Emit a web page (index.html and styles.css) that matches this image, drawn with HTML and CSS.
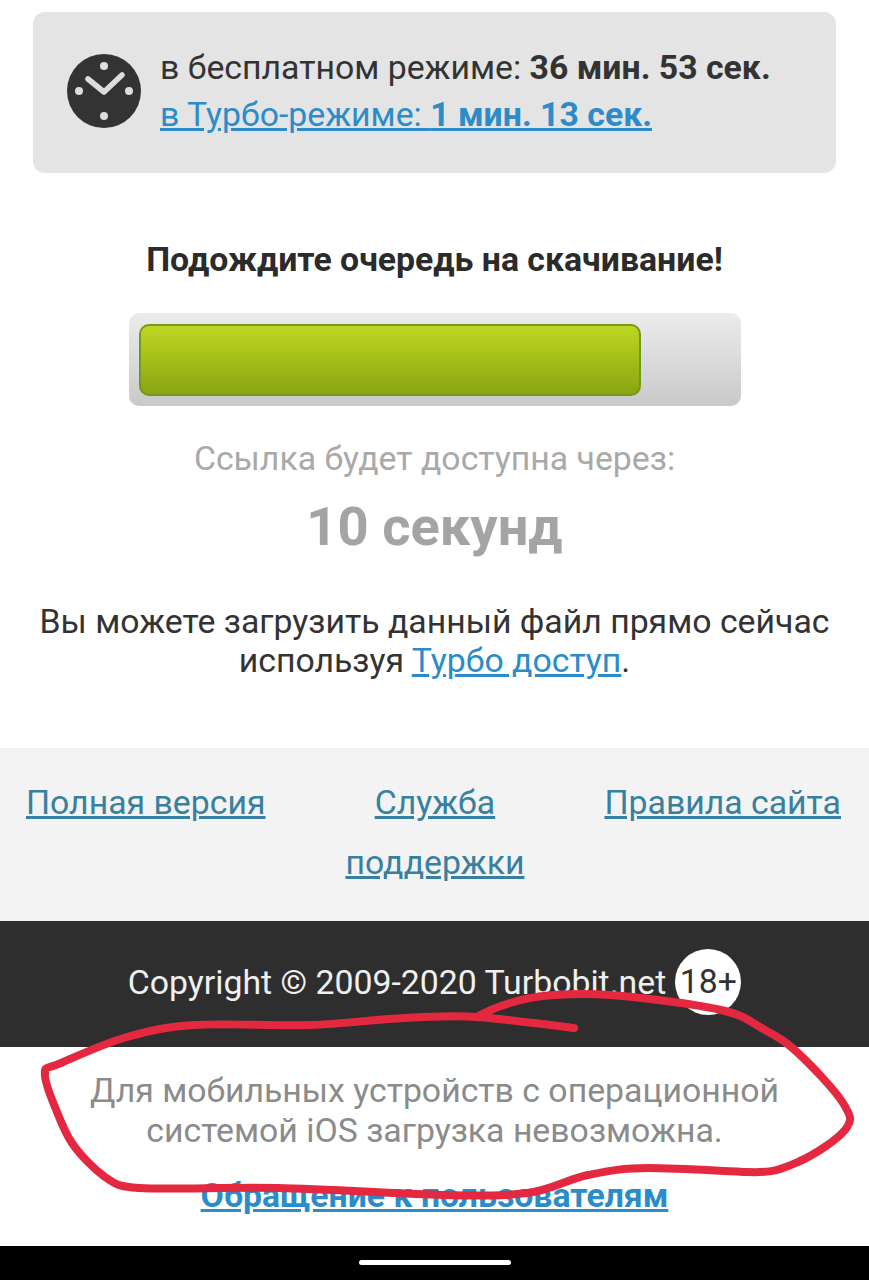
FILE: index.html
```html
<!DOCTYPE html>
<html lang="ru">
<head>
<meta charset="utf-8">
<title>Turbobit</title>
<link rel="stylesheet" href="styles.css">
</head>
<body>
<div class="page">
  <div class="timer">
    <svg class="clock" viewBox="0 0 74 74" width="74" height="74">
      <circle cx="37" cy="37" r="37" fill="#333"/>
      <circle cx="37" cy="12" r="4" fill="#ddd"/>
      <circle cx="37" cy="62" r="4" fill="#ddd"/>
      <circle cx="12" cy="37" r="4" fill="#ddd"/>
      <circle cx="62" cy="37" r="4" fill="#ddd"/>
      <path d="M21 25 L37 38 L55 21" fill="none" stroke="#ddd" stroke-width="5.5" stroke-linecap="round" stroke-linejoin="round"/>
    </svg>
    <div class="timer-text">
      <div>в бесплатном режиме: <b>36 мин. 53 сек.</b></div>
      <a href="#">в Турбо-режиме: <b>1 мин. 13 сек.</b></a>
    </div>
  </div>
  <h1 class="wait">Подождите очередь на скачивание!</h1>
  <div class="bar"><div class="fill"></div></div>
  <p class="avail">Ссылка будет доступна через:</p>
  <p class="secs">10 секунд</p>
  <p class="now">Вы можете загрузить данный файл прямо сейчас<br>используя <a href="#">Турбо доступ</a>.</p>
  <nav class="links">
    <a href="#">Полная версия</a>
    <a href="#" class="mid">Служба поддержки</a>
    <a href="#">Правила сайта</a>
  </nav>
  <footer class="copy">
    <span>Copyright © 2009-2020 Turbobit.net</span><span class="age">18+</span>
  </footer>
  <p class="ios">Для мобильных устройств с операционной<br>системой iOS загрузка невозможна.</p>
  <a href="#" class="appeal">Обращение к пользователям</a>
  <div class="navbar"><span class="pill"></span></div>
  <svg class="scribble" viewBox="0 0 869 1280" width="869" height="1280">
    <path d="M574 1028 C558 1026 505 1019 477 1017 C449 1015 433 1017 405 1018 C377 1019 345 1024 310 1025 C275 1026 224 1023 194 1025 C164 1027 149 1031 127 1037 C105 1043 75 1057 61 1063 C47 1069 44 1066 45 1073 C44 1080 50 1095 55 1107 C60 1119 64 1131 72 1143 C80 1155 94 1169 105 1177 C116 1184 115 1186 139 1188 C168 1190 227 1187 277 1188 C327 1189 401 1194 443 1195 C485 1196 503 1196 527 1193 C551 1190 568 1179 588 1175 C608 1171 622 1168 649 1168 C676 1168 723 1171 748 1172 C773 1173 782 1169 798 1162 C814 1155 837 1140 845 1130 C853 1120 851 1116 843 1103 C835 1090 811 1065 798 1053 C785 1041 778 1037 765 1030 C752 1023 747 1016 721 1010 C695 1004 638 997 610 995 C582 993 571 994 554 995 C537 996 523 999 510 1003 C500 1006 487 1011 477 1017" fill="none" stroke="#e3283f" stroke-width="8" stroke-linecap="round" stroke-linejoin="round"/>
  </svg>
</div>
</body>
</html>
```
FILE: styles.css
```css
* { box-sizing: border-box; }
html, body { margin: 0; padding: 0; background: #fff; }
body { font-family: Roboto, "Noto Sans", sans-serif; color: #333; }
.page { position: relative; width: 869px; height: 1280px; overflow: hidden; padding-top: 12px; text-align: center; }
a { color: #2b8cc9; text-decoration: underline; }
.timer { display: flex; align-items: flex-start; gap: 20px; height: 161px; margin: 0 33px; padding: 32px 0 0 34px; background: #e4e4e4; border-radius: 12px; text-align: left; font-size: 33.8px; line-height: 47px; }
.clock { flex: none; margin-top: 10px; margin-right: -1px; }
.timer-text { white-space: nowrap; }
.wait { margin: 63px 0 0; font-size: 33.8px; line-height: 48px; font-weight: 700; color: #2b2b2b; }
.bar { width: 612px; height: 93px; margin: 29px auto 0; padding: 11px 100px 10px 10px; border-radius: 10px; background: linear-gradient(#ececec, #c9c9c9); }
.fill { height: 72px; border: 2px solid #72991a; border-radius: 10px; background: linear-gradient(#bcd723, #8ca410); }
.avail { margin: 29px 0 0; font-size: 33.8px; line-height: 48px; color: #a9a9a9; }
.secs { margin: 11px 0 0; font-size: 54.3px; line-height: 66px; font-weight: 700; color: #a4a4a4; }
.now { margin: 42px 0 0; font-size: 33.8px; line-height: 39px; color: #333; }
.links { display: flex; justify-content: space-between; align-items: flex-start; height: 173px; margin-top: 68px; padding: 25px 28px 0 26px; background: #f3f3f3; font-size: 33.8px; line-height: 60px; }
.links a { color: #38809f; white-space: nowrap; }
.links a.mid { white-space: normal; width: 200px; }
.copy { display: flex; justify-content: center; align-items: center; height: 126px; padding-bottom: 4px; background: #2e2e2e; color: #f0f0f0; font-size: 33.8px; }
.age { width: 66px; height: 66px; margin-left: 9px; border-radius: 50%; background: #fff; color: #333; line-height: 66px; }
.ios { margin: 24px 0 0; font-size: 33.8px; line-height: 40px; color: #8b8b8b; }
.appeal { display: block; margin-top: 21px; font-size: 33.8px; line-height: 48px; font-weight: 700; }
.navbar { position: absolute; left: 0; right: 0; bottom: 0; height: 34px; background: #000; display: flex; justify-content: center; align-items: center; }
.pill { width: 152px; height: 5px; margin-top: -2px; border-radius: 3px; background: #fff; }
.scribble { position: absolute; left: 0; top: 0; pointer-events: none; }
```
